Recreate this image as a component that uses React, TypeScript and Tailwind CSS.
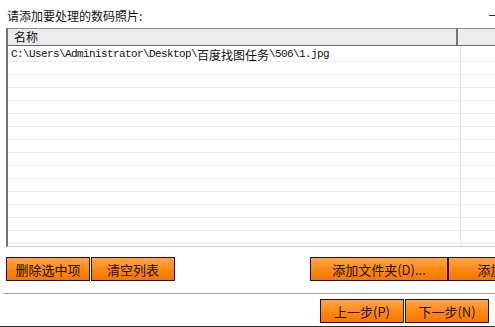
const cjk = "font-['SimSun','Noto_Sans_CJK_SC',sans-serif]"

function OrangeButton({ label, className = '' }: { label: string; className?: string }) {
  return (
    <button
      className={`h-[24px] shrink-0 border border-[#2b1200] bg-gradient-to-b from-[#ffa54a] via-[#ff8a12] to-[#f57600] text-[13px] leading-none text-[#1a0d00] ${className}`}
    >
      {label}
    </button>
  )
}

export default function App() {
  const emptyRows = Array.from({ length: 14 })

  return (
    <div className={`relative flex h-[327px] w-[495px] flex-col overflow-hidden bg-white ${cjk} text-[#111]`}>
      {/* title */}
      <div className="flex h-[28px] items-start justify-between pl-[7px] pt-[9px]">
        <span className="text-[12px] leading-[14px]">请添加要处理的数码照片:</span>
        <span className="mt-[6px] h-px w-[6px] bg-[#333]" />
      </div>

      {/* file list */}
      <div className="ml-[6px] flex h-[219px] w-[540px] flex-col border-l-2 border-t border-b border-l-[#707070] border-t-[#8a8a8a] border-b-[#d4d4d4]">
        <div className="flex h-[17px] shrink-0 border-b border-[#6a6a6a] bg-[#ececec]">
          <div className="w-[450px] border-r-2 border-[#767676] pl-[6px] text-[12px] leading-[16px]">名称</div>
          <div className="flex-1" />
        </div>
        <div className="relative flex-1 overflow-hidden">
          <div className="flex h-[16px] items-center border-b border-[#ececec] pl-[3px] pt-px leading-[15px]">
            <span className="font-['Liberation_Mono',monospace] text-[11px] tracking-[-0.6px]">C:\Users\Administrator\Desktop\</span>
            <span className="text-[12px]">百度找图任务</span>
            <span className="font-['Liberation_Mono',monospace] text-[11px] tracking-[-0.6px]">\506\1.jpg</span>
          </div>
          {emptyRows.map((_, i) => (
            <div key={i} className="h-[13px] border-b border-[#ececec]" />
          ))}
          <div className="absolute top-0 bottom-0 left-[452px] w-px bg-[#e6e6e6]" />
        </div>
      </div>

      {/* action buttons */}
      <div className="mt-[10px] flex pl-[6px]">
        <OrangeButton label="删除选中项" className="w-[84px]" />
        <OrangeButton label="清空列表" className="ml-[1px] w-[84px]" />
        <OrangeButton label="添加文件夹(D)..." className="ml-[135px] w-[138px]" />
        <OrangeButton label="添加文件(F)..." className="w-[138px]" />
      </div>

      <div className="ml-[3px] mt-[12px] h-px bg-[#a4a4a4]" />

      {/* navigation */}
      <div className="mt-[5px] flex pl-[320px]">
        <OrangeButton label="上一步(P)" className="h-[23px] w-[84px]" />
        <OrangeButton label="下一步(N)" className="ml-px h-[23px] w-[84px]" />
      </div>

      <div className="absolute bottom-0 left-0 h-px w-full bg-[#2e2e2e]" />
    </div>
  )
}
